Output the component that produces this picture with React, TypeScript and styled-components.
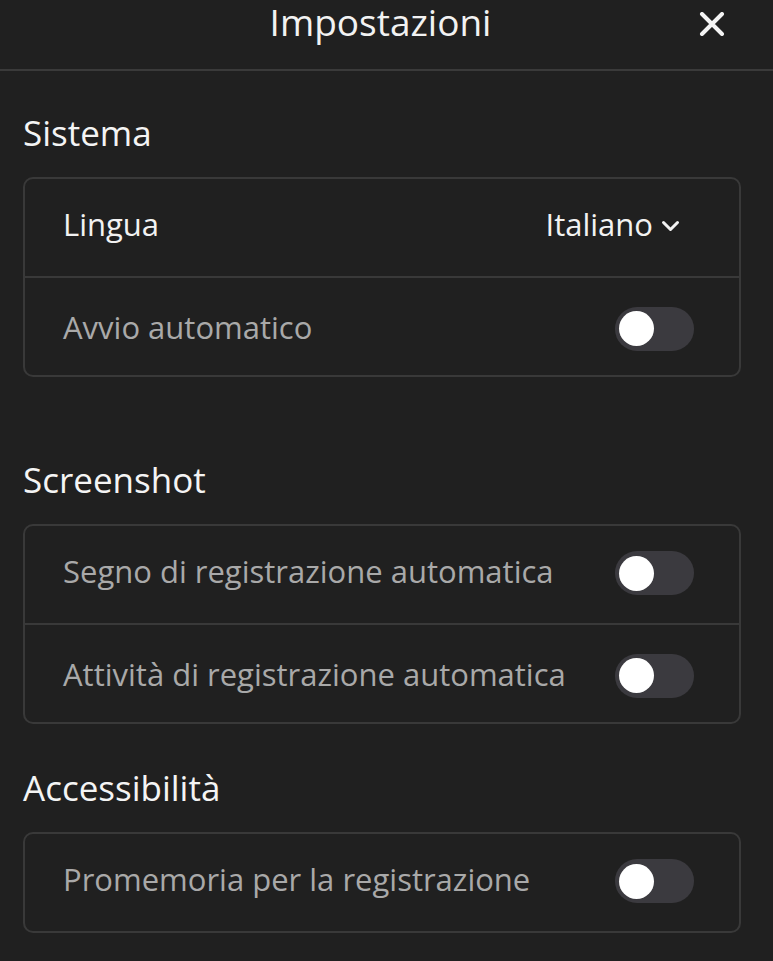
import React, {useState} from 'react'
import styled, {createGlobalStyle} from 'styled-components'

const GlobalStyle = createGlobalStyle`
  html, body {
    margin: 0;
    padding: 0;
    background: #202020;
  }
  body {
    font-family: "Open Sans", "Noto Sans", sans-serif;
    color: #f2f2f2;
  }
`;

type Item = {label: string; kind: 'select' | 'toggle'; value?: string; muted?: boolean};
type Section = {title: string; items: Item[]; gapAfter: number};

const sections: Section[] = [
    {
        title: 'Sistema',
        gapAfter: 79,
        items: [
            {label: 'Lingua', kind: 'select', value: 'Italiano'},
            {label: 'Avvio automatico', kind: 'toggle', muted: true},
        ],
    },
    {
        title: 'Screenshot',
        gapAfter: 40,
        items: [
            {label: 'Segno di registrazione automatica', kind: 'toggle', muted: true},
            {label: 'Attività di registrazione automatica', kind: 'toggle', muted: true},
        ],
    },
    {
        title: 'Accessibilità',
        gapAfter: 0,
        items: [
            {label: 'Promemoria per la registrazione', kind: 'toggle', muted: true},
        ],
    },
];

const App = () => {
    const [flags, setFlags] = useState<Record<string, boolean>>({});

    return (
        <>
            <GlobalStyle/>
            <Window>
                <Header>
                    <Title>Impostazioni</Title>
                    <CloseButton aria-label="Chiudi">
                        <svg width="26" height="24" viewBox="0 0 26 24">
                            <path d="M3 2 L23 22 M23 2 L3 22" stroke="#f4f4f4" strokeWidth="4" strokeLinecap="round"/>
                        </svg>
                    </CloseButton>
                </Header>
                <Content>
                    {sections.map(section => (
                        <SectionBlock key={section.title} $gapAfter={section.gapAfter}>
                            <SectionTitle>{section.title}</SectionTitle>
                            <Card>
                                {section.items.map(item => (
                                    <Row key={item.label}>
                                        <Label $muted={item.muted}>{item.label}</Label>
                                        {item.kind === 'select' ? (
                                            <Select>
                                                {item.value}
                                                <svg width="19" height="12" viewBox="0 0 19 12">
                                                    <path d="M2.5 2.5 L9.5 9.5 L16.5 2.5" fill="none" stroke="#f2f2f2"
                                                          strokeWidth="3" strokeLinecap="round" strokeLinejoin="round"/>
                                                </svg>
                                            </Select>
                                        ) : (
                                            <Track $on={!!flags[item.label]}
                                                   onClick={() => setFlags({...flags, [item.label]: !flags[item.label]})}>
                                                <Knob $on={!!flags[item.label]}/>
                                            </Track>
                                        )}
                                    </Row>
                                ))}
                            </Card>
                        </SectionBlock>
                    ))}
                </Content>
            </Window>
        </>
    )
}

export default App;

const Window = styled.div`
  width: 773px;
  min-height: 961px;
  background: #202020;
`;

const Header = styled.header`
  height: 66px;
  padding-top: 3px;
  border-bottom: 2px solid #3a3a3a;
  display: flex;
  align-items: flex-start;
  justify-content: center;
  position: relative;
`;

const Title = styled.h1`
  margin: 0;
  font-size: 37px;
  line-height: 37px;
  font-weight: 400;
  color: #f2f2f2;
  transform: translateX(-6px);
`;

const CloseButton = styled.button`
  position: absolute;
  right: 48px;
  top: 12px;
  padding: 0;
  background: none;
  border: none;
  display: flex;
  cursor: pointer;
`;

const Content = styled.main`
  padding: 38px 32px 0 23px;
`;

const SectionBlock = styled.section<{ $gapAfter: number }>`
  margin-bottom: ${p => p.$gapAfter}px;
`;

const SectionTitle = styled.h2`
  margin: 0 0 20px 0;
  font-size: 35px;
  line-height: 48px;
  font-weight: 400;
  color: #f4f4f4;
`;

const Card = styled.div`
  border: 2px solid #393939;
  border-radius: 10px;
  overflow: hidden;
`;

const Row = styled.div`
  height: 97px;
  display: flex;
  align-items: center;
  justify-content: space-between;
  padding: 0 45px 0 38px;

  & + & {
    border-top: 2px solid #393939;
  }
`;

const Label = styled.span<{ $muted?: boolean }>`
  font-size: 31px;
  margin-bottom: 7px;
  color: ${p => p.$muted ? '#a9a9a9' : '#f2f2f2'};

  ${Row} + ${Row} > & {
    margin-bottom: 0;
  }
`;

const Select = styled.div`
  display: flex;
  align-items: center;
  gap: 8px;
  font-size: 31px;
  margin-bottom: 8px;
  color: #f2f2f2;
  margin-right: 14px;
  cursor: pointer;

  svg {
    margin-top: 4px;
  }
`;

const Track = styled.div<{ $on: boolean }>`
  width: 79px;
  height: 44px;
  margin-top: 4px;
  border-radius: 22px;
  background: ${p => p.$on ? '#4a7dff' : '#3b3a3f'};
  position: relative;
  cursor: pointer;

  ${Row}:first-child > & {
    margin-top: -3px;
  }
`;

const Knob = styled.div<{ $on: boolean }>`
  position: absolute;
  top: 4.5px;
  left: ${p => p.$on ? '40px' : '4px'};
  width: 35px;
  height: 35px;
  border-radius: 50%;
  background: #ffffff;
`;
